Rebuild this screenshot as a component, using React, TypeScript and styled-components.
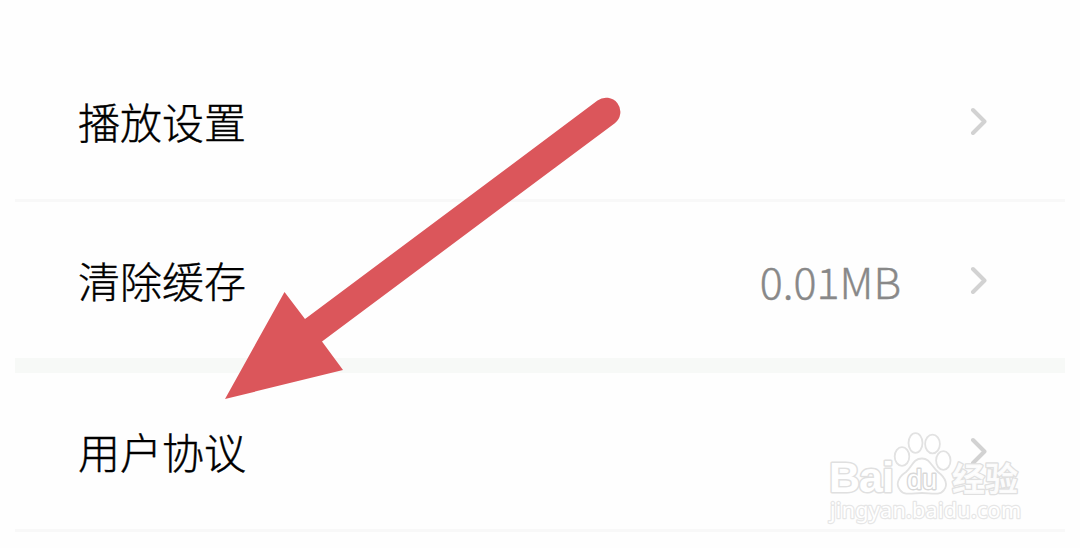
import { createGlobalStyle, styled } from 'styled-components';

const rows = [
  { label: '播放设置', value: '', line: 'thin' },
  { label: '清除缓存', value: '0.01MB', line: 'thick' },
  { label: '用户协议', value: '', line: 'thin' },
];

export default function SettingsPage() {
  return (
    <Main>
      <GlobalStyle />
      {rows.map(({ label, value, line }) => (
        <Row key={label} $thick={line === 'thick'}>
          <Label>{label}</Label>
          {value && <Value>{value}</Value>}
          <Chevron viewBox="0 0 18 28">
            <path d="M3 3 L14.5 14.5 L3 26" />
          </Chevron>
        </Row>
      ))}
      <Watermark viewBox="0 0 204 102">
        <Paw>
          <ellipse cx="82" cy="26.5" rx="7.3" ry="9.3" />
          <ellipse cx="95.5" cy="13" rx="7" ry="9.8" />
          <ellipse cx="112.5" cy="14" rx="7.4" ry="9.3" />
          <ellipse cx="123.3" cy="30.5" rx="7.2" ry="9.3" />
          <path d="M102 28.5 C93 28.5 92 37 86 42 C77 48 76 55 80 60 C84 66 93 63 102 63 C111 63 120 66 124 60 C128 55 126 48 118 42 C111 36 110 28.5 102 28.5 Z" />
        </Paw>
        <Latin x="9" y="62" textLength="65" fontSize="43">
          Bai
        </Latin>
        <Du x="87" y="58.5" textLength="30" fontSize="27">
          du
        </Du>
        <Hanzi x="132" y="60.5" textLength="66" fontSize="33">
          经验
        </Hanzi>
        <Site x="10" y="88" textLength="191" fontSize="21.5">
          jingyan.baidu.com
        </Site>
      </Watermark>
      <Arrow viewBox="0 0 396 302">
        <path d="M0 302 L59.5 195 L80 222 L372.5 3.6 A14.2 14.2 0 0 1 389.8 26.2 L97 244.5 L118 273 Z" />
      </Arrow>
    </Main>
  );
}

const GlobalStyle = createGlobalStyle`
  body {
    margin: 0;
    background-color: #fefefe;
  }
`;

const Main = styled.main`
  position: relative;
  box-sizing: border-box;
  width: 1080px;
  height: 548px;
  padding: 43px 15px 0;
  overflow: hidden;
  font-family: 'Noto Sans CJK SC', sans-serif;
  font-weight: 300;
`;

const Row = styled.div<{ $thick: boolean }>`
  display: flex;
  align-items: center;
  height: 156px;
  padding: 0 77px 0 63px;
  border-bottom: ${({ $thick }) => ($thick ? '15px solid #f7f9f7' : '3px solid #f8f8f8')};
`;

const Label = styled.span`
  flex: 1;
  font-size: 42px;
  line-height: 60px;
  color: #000;
  -webkit-text-stroke: 0.4px #000;
`;

const Value = styled.span`
  margin-right: 69px;
  font-size: 43px;
  line-height: 60px;
  color: #888;
  -webkit-text-stroke: 0.4px #888;
`;

const Chevron = styled.svg`
  width: 18px;
  height: 28px;
  fill: none;
  stroke: #d2d2d2;
  stroke-width: 4;
  stroke-linecap: round;
  stroke-linejoin: round;
`;

const Watermark = styled.svg`
  position: absolute;
  left: 820px;
  top: 430px;
  width: 204px;
  height: 102px;
  overflow: visible;
`;

const Paw = styled.g`
  fill: rgba(255, 255, 255, 0.5);
  stroke: #e2e2e2;
  stroke-width: 1.8;
`;

const Outlined = styled.text`
  fill: #fff;
  stroke: #e0e0e0;
  stroke-width: 2.6;
  stroke-linejoin: round;
  paint-order: stroke;
`;

const Latin = styled(Outlined)`
  font-family: 'Liberation Sans', sans-serif;
  font-weight: 700;
  stroke-width: 3;
`;

const Du = styled(Outlined)`
  font-family: 'Liberation Sans', sans-serif;
  font-weight: 400;
  stroke: #d8d8d8;
  stroke-width: 2.8;
`;

const Hanzi = styled(Outlined)`
  font-family: 'Noto Sans CJK SC', sans-serif;
  font-weight: 700;
  fill: rgba(255, 255, 255, 0.9);
`;

const Site = styled(Outlined)`
  font-family: 'Noto Sans', sans-serif;
  font-weight: 400;
  stroke: #e6e6e6;
  stroke-width: 2.4;
`;

const Arrow = styled.svg`
  position: absolute;
  left: 225px;
  top: 97px;
  width: 396px;
  height: 302px;
  fill: #db565b;
`;
